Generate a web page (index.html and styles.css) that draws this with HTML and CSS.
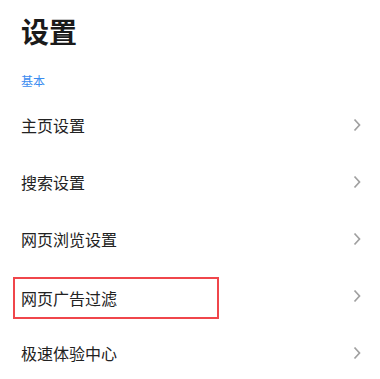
FILE: index.html
```html
<!DOCTYPE html>
<html lang="zh-CN">
<head>
  <meta charset="UTF-8">
  <meta name="viewport" content="width=device-width, initial-scale=1.0">
  <title>设置</title>
  <link rel="stylesheet" href="styles.css">
</head>
<body>
  <h1 class="page-title">设置</h1>
  <div class="section-label">基本</div>
  <ul class="settings-list">
    <li class="settings-row">
      <span class="row-label">主页设置</span>
      <svg class="chevron" viewBox="0 0 8 14"><polyline points="1.5,1.5 6.5,7 1.5,12.5"/></svg>
    </li>
    <li class="settings-row">
      <span class="row-label">搜索设置</span>
      <svg class="chevron" viewBox="0 0 8 14"><polyline points="1.5,1.5 6.5,7 1.5,12.5"/></svg>
    </li>
    <li class="settings-row">
      <span class="row-label">网页浏览设置</span>
      <svg class="chevron" viewBox="0 0 8 14"><polyline points="1.5,1.5 6.5,7 1.5,12.5"/></svg>
    </li>
    <li class="settings-row">
      <span class="row-label highlight">网页广告过滤</span>
      <svg class="chevron" viewBox="0 0 8 14"><polyline points="1.5,1.5 6.5,7 1.5,12.5"/></svg>
    </li>
    <li class="settings-row">
      <span class="row-label">极速体验中心</span>
      <svg class="chevron" viewBox="0 0 8 14"><polyline points="1.5,1.5 6.5,7 1.5,12.5"/></svg>
    </li>
  </ul>
</body>
</html>
```

FILE: styles.css
```css
* {
  box-sizing: border-box;
}

body {
  margin: 0;
  padding: 0 19px 0 21px;
  background: #fff;
  color: #222;
  font-family: 'Noto Sans CJK SC', 'Noto Sans', sans-serif;
}

.page-title {
  margin: 11px 0 0;
  font-size: 28px;
  line-height: 40px;
  font-weight: 700;
  color: #1a1a1a;
}

.section-label {
  margin-top: 22px;
  font-size: 12px;
  line-height: 16px;
  color: #3b8cf0;
}

.settings-list {
  list-style: none;
  margin: 7px 0 0;
  padding: 0;
}

.settings-row {
  display: flex;
  align-items: center;
  justify-content: space-between;
  height: 57px;
}

.row-label {
  font-size: 16px;
  line-height: 22px;
}

/* red annotation box round one row */
.highlight {
  display: flex;
  align-items: center;
  width: 206px;
  height: 42px;
  margin: 4px 0 0 -8px;
  padding-left: 6px;
  border: 2px solid #f0464b;
}

.chevron {
  width: 8px;
  height: 14px;
  fill: none;
  stroke: #a0a0a0;
  stroke-width: 1.7;
}
```
